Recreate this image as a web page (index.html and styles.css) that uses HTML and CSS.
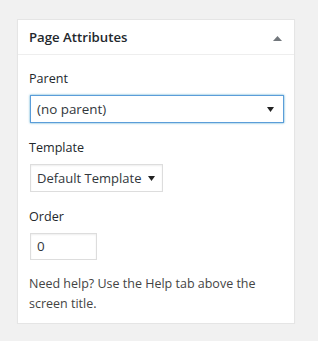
FILE: index.html
```html
<!DOCTYPE html>
<html lang="en">
<head>
    <meta charset="UTF-8">
    <title>Page Attributes</title>
    <link rel="stylesheet" href="styles.css">
</head>
<body>
    <div class="postbox">
        <div class="postbox-header">
            <h2>Page Attributes</h2>
            <svg class="toggle" width="9" height="5" viewBox="0 0 9 5"><path d="M0 5 L4.5 0 L9 5 Z" fill="#72777c"/></svg>
        </div>
        <div class="inside">
            <p class="label">Parent</p>
            <div class="select parent focus">
                <span>(no parent)</span>
                <svg width="7" height="5" viewBox="0 0 7 5"><path d="M0 0 L7 0 L3.5 5 Z" fill="#222"/></svg>
            </div>

            <p class="label">Template</p>
            <div class="select template">
                <span>Default Template</span>
                <svg width="7" height="5" viewBox="0 0 7 5"><path d="M0 0 L7 0 L3.5 5 Z" fill="#222"/></svg>
            </div>

            <p class="label">Order</p>
            <div class="order">0</div>

            <p class="help">Need help? Use the Help tab above the screen title.</p>
        </div>
    </div>
</body>
</html>
```

FILE: styles.css
```css
body {
    margin: 0;
    padding: 19px 0 0 17px;
    background-color: #f1f1f1;
    font-family: 'Open Sans', sans-serif;
    color: #444;
}

.postbox {
    width: 276px;
    height: 303px;
    background-color: #fff;
    border: 1px solid #e5e5e5;
    box-shadow: 0 1px 1px rgba(0, 0, 0, 0.04);
}

.postbox-header {
    display: flex;
    justify-content: space-between;
    align-items: center;
    height: 34px;
    padding: 0 12px 0 11px;
    border-bottom: 1px solid #eee;
}

.postbox-header h2 {
    margin: 0;
    font-size: 13.2px;
    font-weight: 600;
    color: #23282d;
}

.toggle {
    margin-top: 3px;
}

.inside {
    padding: 14px 11px 0 11px;
}

.label {
    margin: 0 0 7px;
    font-size: 12.6px;
    line-height: 19px;
    color: #23282d;
}

.select {
    display: flex;
    justify-content: space-between;
    align-items: center;
    box-sizing: border-box;
    height: 28px;
    padding: 0 9px 0 6px;
    margin-bottom: 15px;
    border: 1px solid #ddd;
    box-shadow: inset 0 1px 2px rgba(0, 0, 0, 0.07);
    font-size: 13.4px;
    color: #32373c;
    white-space: nowrap;
}

.select.parent {
    margin-left: 1px;
    width: 254px;
}

.select.focus {
    border-color: #5b9dd9;
    box-shadow: 0 0 2px rgba(30, 140, 190, 0.8);
}

.select.template {
    margin-left: 1px;
    width: 133px;
    padding-right: 7px;
    font-size: 13px;
}

.order {
    box-sizing: border-box;
    width: 67px;
    height: 27px;
    margin: 0 0 14px 1px;
    padding: 0 6px;
    border: 1px solid #ddd;
    box-shadow: inset 0 1px 2px rgba(0, 0, 0, 0.07);
    font-size: 13.4px;
    line-height: 25px;
    color: #32373c;
}

.help {
    margin: 0;
    font-size: 12.5px;
    line-height: 20px;
    color: #444;
}
```
